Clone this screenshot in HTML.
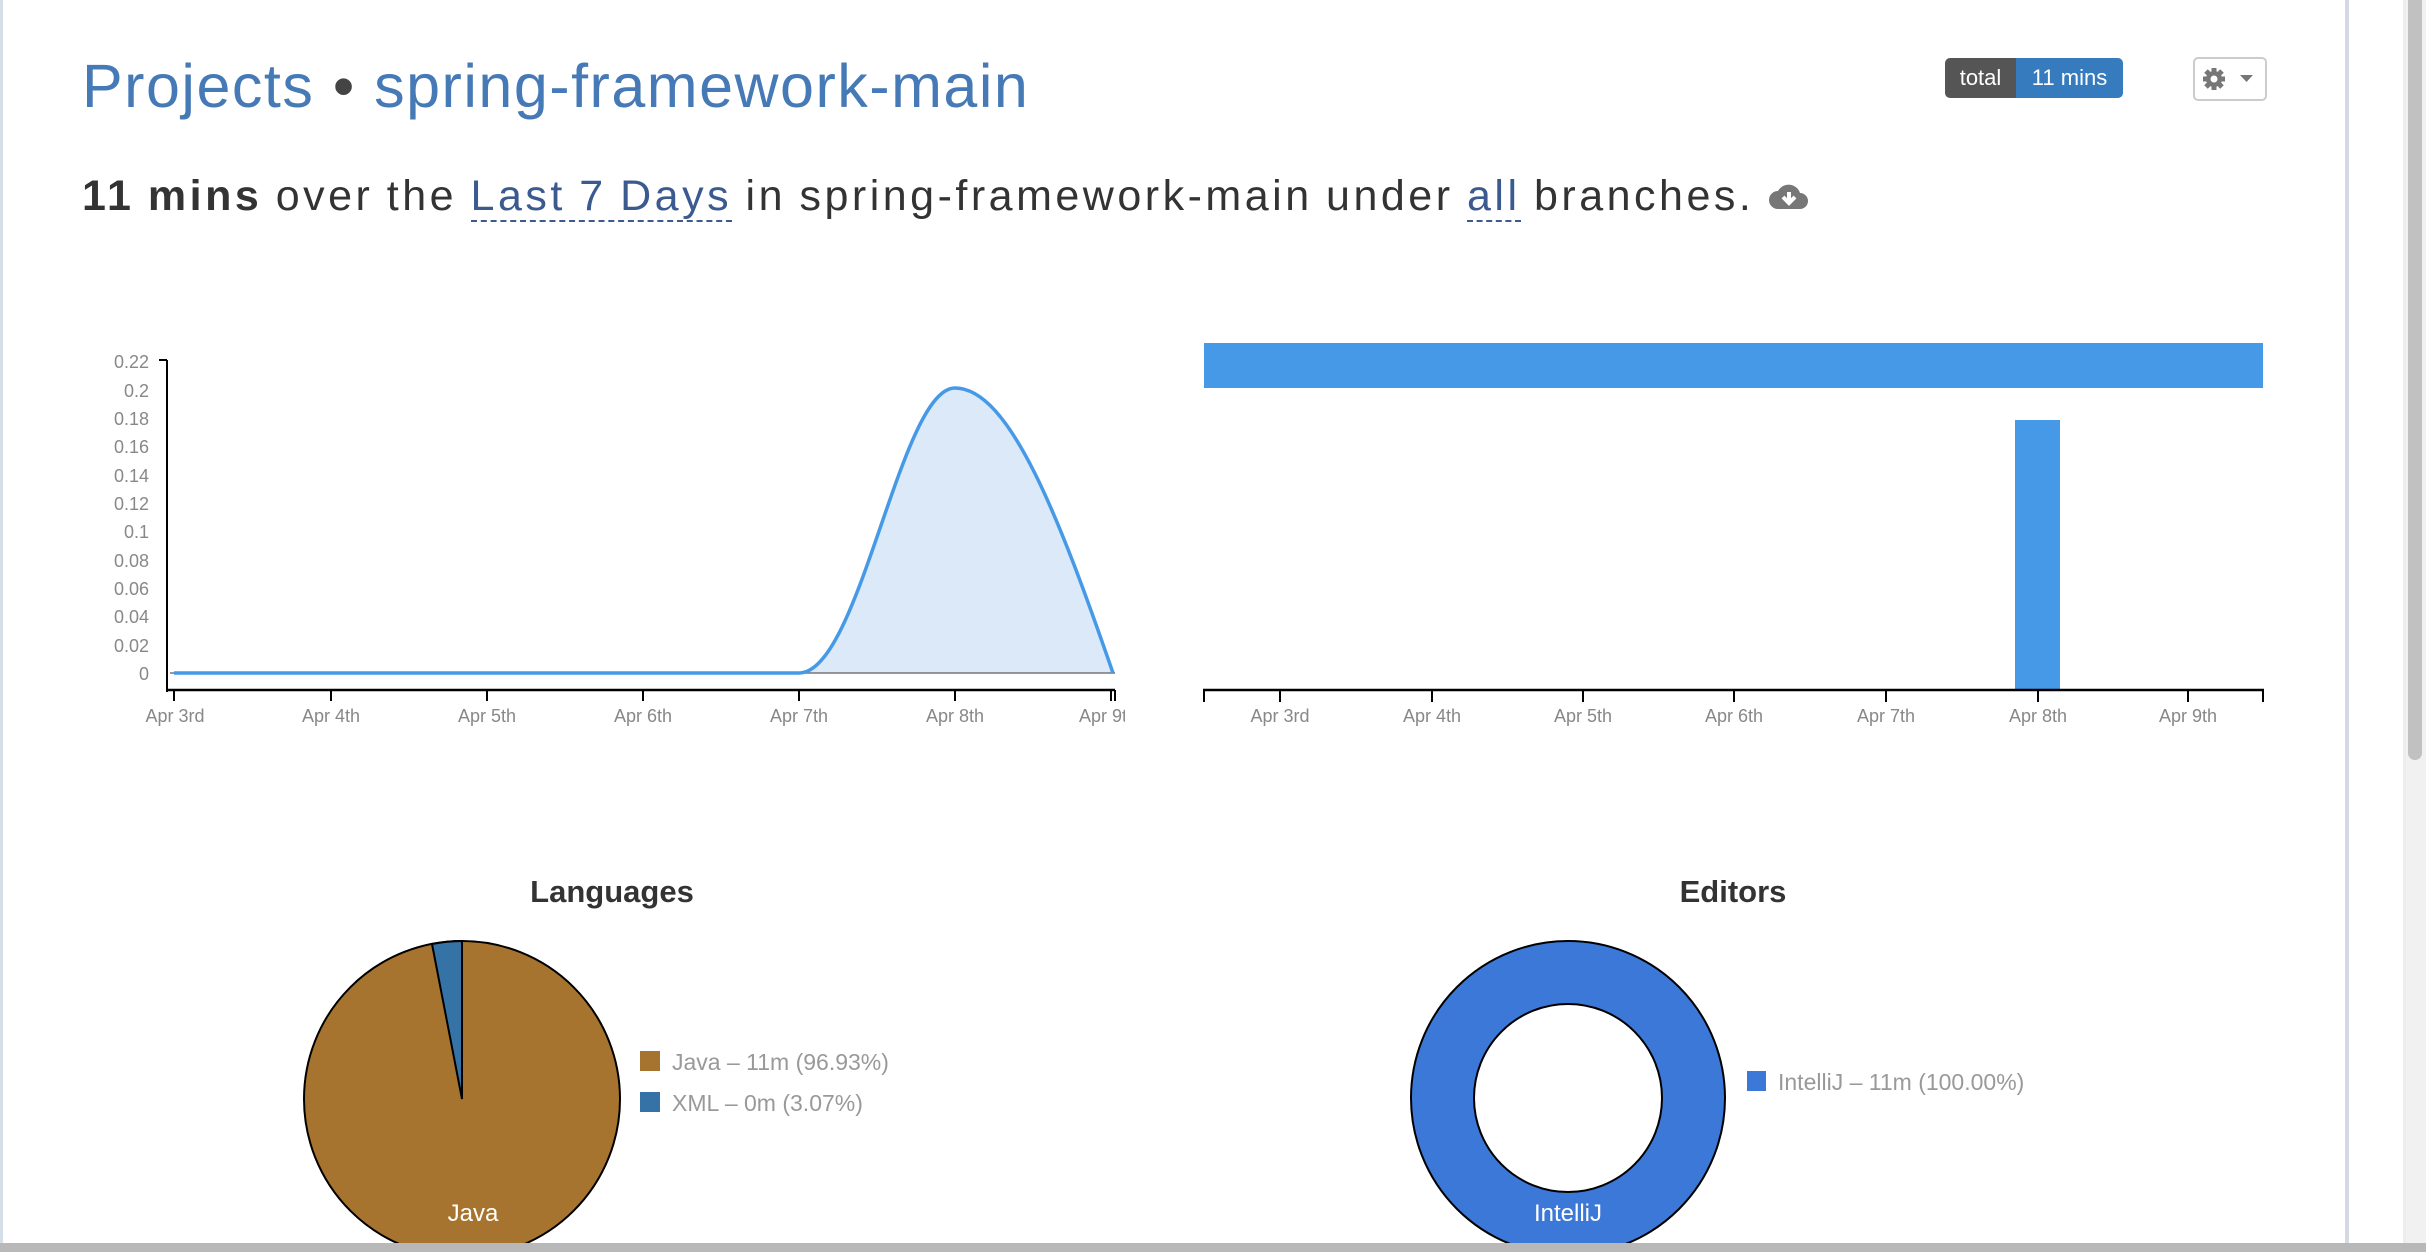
<!DOCTYPE html>
<html><head><meta charset="utf-8"><style>
html,body{margin:0;padding:0;background:#fff;width:2426px;height:1252px;overflow:hidden;font-family:"Liberation Sans",sans-serif;}
.abs{position:absolute;}
#title{left:82px;top:51px;font-size:61px;color:#467ab6;white-space:nowrap;letter-spacing:1.5px}
#sub{left:82px;top:172px;font-size:43px;color:#333;white-space:nowrap;letter-spacing:3.5px;word-spacing:-2px}
#sub a{color:#3b5a8f;text-decoration:none;border-bottom:2px dashed #3b5a8f}
.badge{top:58px;height:40px;font-size:22px;color:#fff;line-height:40px;text-align:center;}
</style></head><body>
<div class="abs" style="left:0;top:0;width:3px;height:1252px;background:#d5dde6"></div>
<div class="abs" style="left:2345px;top:0;width:4px;height:1252px;background:#d3dae4"></div>
<div class="abs" style="left:2349px;top:0;width:54px;height:1252px;background:#fff"></div>
<div class="abs" style="left:2403px;top:0;width:3px;height:1252px;background:#eee"></div>
<div class="abs" style="left:2406px;top:0;width:20px;height:1252px;background:#f1f1f1"></div>
<div class="abs" style="left:2408px;top:0;width:14px;height:760px;background:#c1c1c1;border-radius:0 0 7px 7px"></div>
<div class="abs" style="left:0;top:1243px;width:2426px;height:9px;background:#b8b8b8"></div>

<div id="title" class="abs">Projects <span style="color:#444">•</span> spring-framework-main</div>
<div id="sub" class="abs"><b>11 mins</b> over the <a>Last 7 Days</a> in spring-framework-main under <a>all</a> branches.
<svg width="42" height="32" viewBox="0 0 42 32" style="vertical-align:-3px"><path d="M10 28 a9 9 0 0 1 0-18 a12 12 0 0 1 22 2 a8 8 0 0 1 0 16z" fill="#777"/><path d="M21 11v10M15 16l6 6 6-6" stroke="#fff" stroke-width="4" fill="none"/></svg></div>

<div class="abs badge" style="left:1945px;width:71px;background:#555;border-radius:5px 0 0 5px">total</div>
<div class="abs badge" style="left:2016px;width:107px;background:#367bbd;border-radius:0 5px 5px 0">11 mins</div>
<div class="abs" style="left:2193px;top:57px;width:70px;height:40px;border:2px solid #ccc;border-radius:5px;"></div>
<svg class="abs" style="left:2200px;top:62px" width="60" height="34" viewBox="0 0 60 34">
<g transform="translate(14,17)" fill="#777"><circle r="8"/><g stroke="#777" stroke-width="5"><line x1="0" y1="-11" x2="0" y2="11"/><line x1="-11" y1="0" x2="11" y2="0"/><line x1="-8" y1="-8" x2="8" y2="8"/><line x1="-8" y1="8" x2="8" y2="-8"/></g><circle r="3.5" fill="#fff"/></g>
<path d="M40 13h13l-6.5 7z" fill="#777"/></svg>

<svg class="abs" style="left:0;top:0" width="2426" height="1252">
<g font-family="Liberation Sans,sans-serif" font-size="18" fill="#888">
<path d="M174 673 L799 673 C860 673 900 388 955 388 C1010 388 1060 520 1113 673 Z" fill="#dbe9f8"/>
<line x1="170" y1="673" x2="1115" y2="673" stroke="#777" stroke-width="1.5"/>
<path d="M174 673 L799 673 C860 673 900 388 955 388 C1010 388 1060 520 1113 673" fill="none" stroke="#4599e6" stroke-width="3.5"/>
<line x1="167" y1="360" x2="167" y2="692" stroke="#000" stroke-width="2"/>
<line x1="159" y1="360" x2="167" y2="360" stroke="#000" stroke-width="2"/>
<line x1="166" y1="690" x2="1115" y2="690" stroke="#000" stroke-width="2.5"/>
<g stroke="#000" stroke-width="2"><line x1="174" y1="690" x2="174" y2="701"/><line x1="331" y1="690" x2="331" y2="701"/><line x1="487" y1="690" x2="487" y2="701"/><line x1="643" y1="690" x2="643" y2="701"/><line x1="799" y1="690" x2="799" y2="701"/><line x1="955" y1="690" x2="955" y2="701"/><line x1="1111" y1="690" x2="1111" y2="701"/><line x1="1115" y1="690" x2="1115" y2="701"/></g>
<g text-anchor="end"><text x="149" y="680">0</text><text x="149" y="652">0.02</text><text x="149" y="623">0.04</text><text x="149" y="595">0.06</text><text x="149" y="567">0.08</text><text x="149" y="538">0.1</text><text x="149" y="510">0.12</text><text x="149" y="482">0.14</text><text x="149" y="453">0.16</text><text x="149" y="425">0.18</text><text x="149" y="397">0.2</text><text x="149" y="368">0.22</text></g>
<g text-anchor="middle"><text x="175" y="722">Apr 3rd</text><text x="331" y="722">Apr 4th</text><text x="487" y="722">Apr 5th</text><text x="643" y="722">Apr 6th</text><text x="799" y="722">Apr 7th</text><text x="955" y="722">Apr 8th</text><text x="1108" y="722">Apr 9th</text></g>
<rect x="1125" y="650" width="20" height="80" fill="#fff"/>

<rect x="1204" y="343" width="1059" height="45" fill="#4699e6"/>
<rect x="2015" y="420" width="45" height="270" fill="#4699e6"/>
<line x1="1203" y1="690" x2="2264" y2="690" stroke="#000" stroke-width="2.5"/>
<g stroke="#000" stroke-width="2"><line x1="1204" y1="690" x2="1204" y2="702"/><line x1="1280" y1="690" x2="1280" y2="702"/><line x1="1432" y1="690" x2="1432" y2="702"/><line x1="1583" y1="690" x2="1583" y2="702"/><line x1="1734" y1="690" x2="1734" y2="702"/><line x1="1886" y1="690" x2="1886" y2="702"/><line x1="2038" y1="690" x2="2038" y2="702"/><line x1="2188" y1="690" x2="2188" y2="702"/><line x1="2263" y1="690" x2="2263" y2="702"/></g>
<g text-anchor="middle"><text x="1280" y="722">Apr 3rd</text><text x="1432" y="722">Apr 4th</text><text x="1583" y="722">Apr 5th</text><text x="1734" y="722">Apr 6th</text><text x="1886" y="722">Apr 7th</text><text x="2038" y="722">Apr 8th</text><text x="2188" y="722">Apr 9th</text></g>
</g>

<g font-family="Liberation Sans,sans-serif">
<text x="612" y="902" text-anchor="middle" font-size="31" font-weight="bold" fill="#333">Languages</text>
<text x="1733" y="902" text-anchor="middle" font-size="31" font-weight="bold" fill="#333">Editors</text>
<circle cx="462" cy="1099" r="158" fill="#a6742f" stroke="#000" stroke-width="2"/>
<path d="M462 1099 L462 941 A158 158 0 0 0 432 944 Z" fill="#3572a5" stroke="#000" stroke-width="2"/>
<text x="473" y="1221" text-anchor="middle" font-size="24" fill="#fff">Java</text>
<rect x="640" y="1051" width="20" height="20" fill="#a6742f"/>
<rect x="640" y="1092" width="20" height="20" fill="#3572a5"/>
<text x="672" y="1070" font-size="23" fill="#999">Java – 11m (96.93%)</text>
<text x="672" y="1111" font-size="23" fill="#999">XML – 0m (3.07%)</text>
<circle cx="1568" cy="1098" r="125.5" fill="none" stroke="#3c78d8" stroke-width="63"/>
<circle cx="1568" cy="1098" r="157" fill="none" stroke="#000" stroke-width="2"/>
<circle cx="1568" cy="1098" r="94" fill="#fff" stroke="#000" stroke-width="2"/>
<text x="1568" y="1221" text-anchor="middle" font-size="24" fill="#fff">IntelliJ</text>
<rect x="1747" y="1071" width="19" height="20" fill="#3c78d8"/>
<text x="1778" y="1090" font-size="23" fill="#999">IntelliJ – 11m (100.00%)</text>
</g>
<rect x="0" y="1243" width="2426" height="9" fill="#b8b8b8"/>
</svg>
</body></html>
